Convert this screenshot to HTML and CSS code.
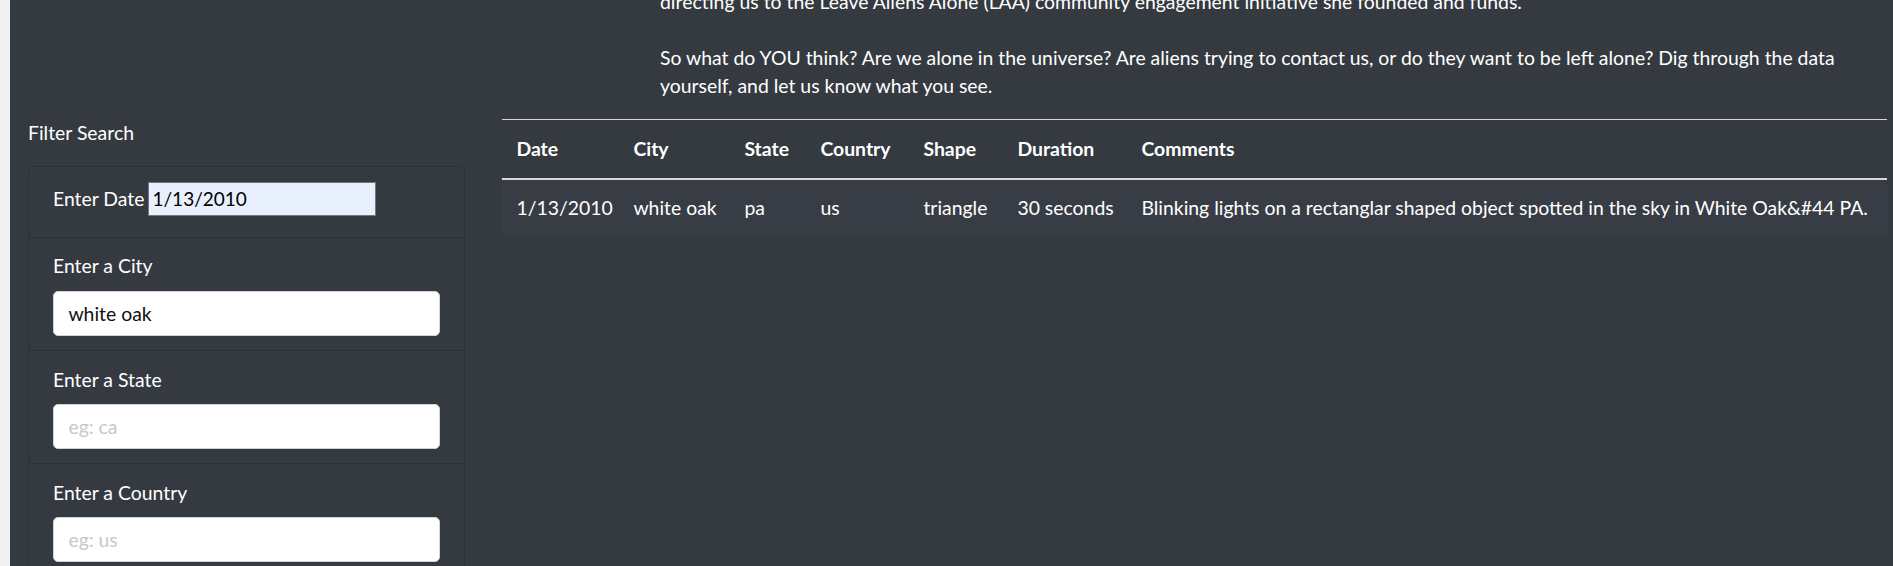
FILE: index.html
```html
<!DOCTYPE html>
<html lang="en">
<head>
<meta charset="utf-8">
<title>UFO Sightings</title>
<link rel="stylesheet" href="styles.css">
</head>
<body>
<div class="page">
  <section class="intro">
    <p>directing us to the Leave Aliens Alone (LAA) community engagement initiative she founded and funds.<br><br>So what do YOU think? Are we alone in the universe? Are aliens trying to contact us, or do they want to be left alone? Dig through the data yourself, and let us know what you see.</p>
  </section>
  <div class="main">
    <aside class="filters">
      <p class="filter-title">Filter Search</p>
      <ul class="filter-list">
        <li class="filter-item filter-item-date">
          <label for="datetime">Enter Date</label>
          <input class="date-input" id="datetime" type="text" value="1/13/2010">
        </li>
        <li class="filter-item">
          <label for="city">Enter a City</label>
          <input class="form-input" id="city" type="text" value="white oak" placeholder="eg: benton">
        </li>
        <li class="filter-item">
          <label for="state">Enter a State</label>
          <input class="form-input" id="state" type="text" placeholder="eg: ca">
        </li>
        <li class="filter-item">
          <label for="country">Enter a Country</label>
          <input class="form-input" id="country" type="text" placeholder="eg: us">
        </li>
        <li class="filter-item">
          <label for="shape">Enter a Shape</label>
          <input class="form-input" id="shape" type="text" placeholder="eg: circle">
        </li>
      </ul>
    </aside>
    <div class="results">
      <table class="ufo-table">
        <colgroup>
          <col class="c-date"><col class="c-city"><col class="c-state"><col class="c-country"><col class="c-shape"><col class="c-duration"><col>
        </colgroup>
        <thead>
          <tr><th>Date</th><th>City</th><th>State</th><th>Country</th><th>Shape</th><th>Duration</th><th>Comments</th></tr>
        </thead>
        <tbody>
          <tr><td>1/13/2010</td><td>white oak</td><td>pa</td><td>us</td><td>triangle</td><td>30 seconds</td><td>Blinking lights on a rectanglar shaped object spotted in the sky in White Oak&amp;#44 PA.</td></tr>
        </tbody>
      </table>
    </div>
  </div>
</div>
</body>
</html>
```
FILE: styles.css
```css
html, body {
  margin: 0;
  padding: 0;
  height: 100%;
  overflow: hidden;
}

body {
  background: #f0f0f0;
  font-family: Lato, "Open Sans", sans-serif;
  font-size: 19.4px;
  line-height: 28.8px;
  color: #fff;
}

.page {
  margin-left: 10px;
  min-height: 100%;
  background: #343a40;
  overflow: hidden;
}

.intro {
  margin: -12px 0 0 650px;
  width: 1220px;
}

.intro p {
  margin: 0 0 19.2px;
  line-height: 28px;
}

.main {
  display: flex;
  align-items: flex-start;
}

.filters {
  width: 437px;
  padding: 0 19px 0 18px;
  flex: none;
}

.filter-title {
  margin: 0 0 18.2px;
}

.filter-list {
  list-style: none;
  margin: 0;
  padding: 0;
  border: 1px solid #2c3136;
  border-radius: 5px;
}

.filter-item {
  padding: 14.4px 24px;
  border-top: 1px solid #2c3136;
}

.filter-item:first-child {
  border-top: 0;
}

.filter-item label {
  display: block;
  margin-bottom: 9.6px;
}

.filter-item-date {
  display: flex;
  align-items: baseline;
  gap: 3px;
  padding-bottom: 21.4px;
}

.filter-item-date label {
  margin: 0;
}

.date-input {
  box-sizing: border-box;
  width: 228px;
  height: 34px;
  padding: 0 4px;
  border: 1px solid #767676;
  background: #e8f0fe;
  color: #000;
  font: inherit;
  font-size: 19px;
  outline: none;
}

.form-input {
  box-sizing: border-box;
  display: block;
  width: 100%;
  height: 45px;
  padding: 7.2px 14.4px;
  border: 1px solid #ced4da;
  border-radius: 5px;
  background: #fff;
  color: #111;
  font: inherit;
  outline: none;
}

.form-input::placeholder {
  color: #c8c8c8;
}

.results {
  flex: 1;
  margin: 0 6px 0 18px;
}

.ufo-table {
  width: 100%;
  table-layout: fixed;
  border-collapse: collapse;
  color: #fff;
}

.c-date { width: 117px; }
.c-city { width: 111px; }
.c-state { width: 76px; }
.c-country { width: 103px; }
.c-shape { width: 94px; }
.c-duration { width: 124px; }

.ufo-table th,
.ufo-table td {
  padding: 14.4px;
  text-align: left;
  white-space: nowrap;
}

.ufo-table th {
  font-weight: 700;
  border-top: 1px solid #d6d8db;
  border-bottom: 2px solid #d6d8db;
}

.ufo-table tbody tr {
  background: #383d45;
}
```
